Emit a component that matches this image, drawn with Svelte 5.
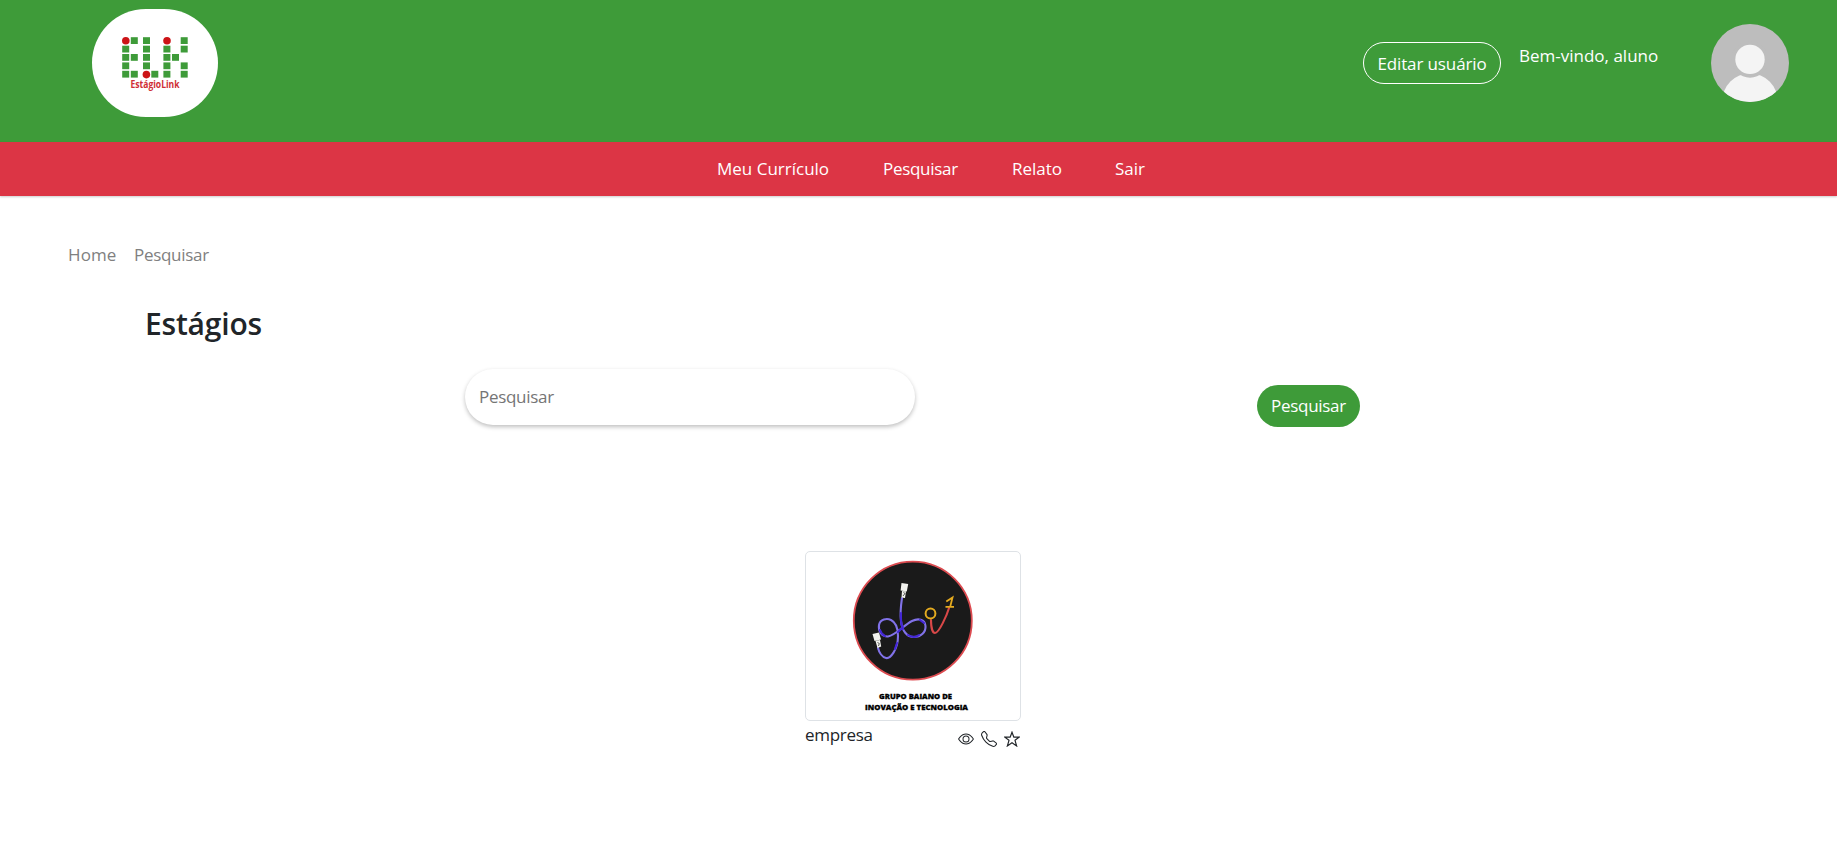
<script>
  const nav = [
    { label: 'Meu Currículo', cls: 'n1' },
    { label: 'Pesquisar', cls: 'n2' },
    { label: 'Relato', cls: 'n3' },
    { label: 'Sair', cls: 'n4' }
  ];
  const rows = [28.2, 36.7, 45, 53.4, 61.8];
  const squares = [
    [30.2, 1], [30.2, 2], [30.2, 3], [30.2, 4],
    [38.8, 0], [38.8, 2], [38.8, 4],
    [51, 0], [51, 1], [51, 2], [51, 3], [59.3, 4],
    [71.4, 1], [71.4, 2], [71.4, 3], [71.4, 4], [80, 2],
    [88.7, 0], [88.7, 1], [88.7, 3], [88.7, 4]
  ];
  const dots = [[33.8, 31.7], [54.4, 65.6], [75, 31.7]];
</script>

<header>
  <svg class="logo" width="126" height="108" viewBox="0 0 126 108">
    {#each squares as [x, r]}
      <rect {x} y={rows[r]} width="7" height="6.8" fill="#3e9b39" />
    {/each}
    {#each dots as [cx, cy]}
      <circle {cx} {cy} r="3.8" fill="#cc1417" />
    {/each}
    <text x="38.5" y="79" textLength="49" lengthAdjust="spacingAndGlyphs">EstágioLink</text>
  </svg>
  <div class="user">
    <button class="edit">Editar usuário</button>
    <span class="welcome">Bem-vindo, aluno</span>
    <svg class="avatar" width="78" height="78" viewBox="0 0 78 78">
      <defs><clipPath id="round"><circle cx="39" cy="39" r="39" /></clipPath></defs>
      <g clip-path="url(#round)">
        <rect width="78" height="78" fill="#bdbdbd" />
        <circle cx="39" cy="77.2" r="27.7" fill="#f4f4f4" />
        <circle cx="39" cy="35.4" r="18.3" fill="#bdbdbd" />
        <circle cx="39" cy="35.4" r="14.7" fill="#f4f4f4" />
      </g>
    </svg>
  </div>
</header>

<nav>
  {#each nav as item}
    <a class={item.cls} href="#top">{item.label}</a>
  {/each}
</nav>

<main>
  <div class="crumbs"><span class="home">Home</span><span>Pesquisar</span></div>
  <h2>Estágios</h2>
  <form class="search">
    <input placeholder="Pesquisar" />
    <button type="button">Pesquisar</button>
  </form>

  <section class="company">
    <div class="thumb">
      <svg width="214" height="167" viewBox="0 0 214 167">
        <circle cx="106.800" cy="68.700" r="59" fill="#1a1a1a" stroke="#dc4b50" stroke-width="1.800" />
        <g fill="none" stroke-width="2.100" stroke-linecap="round">
          <path stroke="#8172e8" d="M96 46C94.500 56 94 62 95 69C96 79 101 85 108 85C115 85 120 80 119.500 74C119 67 112 66 106 69C98 73 90 83 82 84.500C76 85 72 79 73 73C74 67 81 66 85 68C91 71 92 78 92 84C92 98 84 107 80 106C76 105 73 100 72 96" />
          <path stroke="#4326d5" d="M95 61C94.500 68 95 72 97 77M92 80L97 75M102 83C105 85 109 86 113 83M74 78C75 81 77 83 79 84M91 91L89 97M114 68L118 71" />
          <path stroke="#d94848" d="M125 68C125 77 127 81 129 81C133 81 141 63 143 56" />
          <g stroke="#e4ab20"><circle cx="124.500" cy="61.500" r="4.900" stroke-width="2" /><path stroke-width="1.800" stroke-linecap="butt" d="M140.300 49.500L146.500 45.500L144.200 54.800M139.500 54.800H148" /></g>
        </g>
        <g fill="#f2f2ee">
          <path d="M95.500 31L102.200 32L100.800 39.500L94.600 38.500ZM96 39L100 39.600L99 46L95.500 45.500Z" />
          <path d="M66.500 82L73 80.500L75 87.500L68.500 89ZM69.500 89L74 88L75.200 94.500L71.500 96Z" />
        </g>
        <path d="M97.500 40.500L99 41.500L97 44M71.500 90.500L73.300 91.500L72.500 94" stroke="#1a1a1a" stroke-width=".7" fill="none" />
        <g class="brand"><text x="73" y="147" textLength="73" lengthAdjust="spacingAndGlyphs">GRUPO BAIANO DE</text><text x="59" y="157.500" textLength="103" lengthAdjust="spacingAndGlyphs">INOVAÇÃO E TECNOLOGIA</text></g>
      </svg>
    </div>
    <div class="meta">
      <span class="name">empresa</span>
      <div class="icons">
        <svg viewBox="0 0 16 16"><path d="M16 8s-3-5.500-8-5.500S0 8 0 8s3 5.500 8 5.500S16 8 16 8M1.173 8a13 13 0 0 1 1.660-2.043C4.120 4.668 5.880 3.500 8 3.500s3.879 1.168 5.168 2.457A13 13 0 0 1 14.828 8q-.086.13-.195.288c-.335.48-.83 1.120-1.465 1.755C11.879 11.332 10.119 12.500 8 12.500s-3.879-1.168-5.168-2.457A13 13 0 0 1 1.172 8z" /><path d="M8 5.500a2.500 2.500 0 1 0 0 5 2.500 2.500 0 0 0 0-5M4.500 8a3.500 3.500 0 1 1 7 0 3.500 3.500 0 0 1-7 0" /></svg>
        <svg viewBox="0 0 16 16"><path d="M3.654 1.328a.678.678 0 0 0-1.015-.063L1.605 2.300c-.483.484-.661 1.169-.45 1.770a17.600 17.600 0 0 0 4.168 6.608 17.600 17.600 0 0 0 6.608 4.168c.601.211 1.286.033 1.770-.45l1.034-1.034a.678.678 0 0 0-.063-1.015l-2.307-1.794a.68.68 0 0 0-.58-.122l-2.190.547a1.750 1.750 0 0 1-1.657-.459L5.482 8.062a1.750 1.750 0 0 1-.46-1.657l.548-2.190a.68.68 0 0 0-.122-.58zM1.884.511a1.745 1.745 0 0 1 2.612.163L6.290 2.980c.329.423.445.974.315 1.494l-.547 2.190a.68.68 0 0 0 .178.643l2.457 2.457a.68.68 0 0 0 .644.178l2.189-.547a1.750 1.750 0 0 1 1.494.315l2.306 1.794c.829.645.905 1.870.163 2.611l-1.034 1.034c-.74.74-1.846 1.065-2.877.702a18.600 18.600 0 0 1-7.010-4.420 18.600 18.600 0 0 1-4.420-7.009c-.362-1.030-.037-2.137.703-2.877z" /></svg>
        <svg viewBox="0 0 16 16"><path class="star" d="M8 1.200L9.850 6.150H15.200L11 9.350L12.600 14.900L8 11.700L3.400 14.900L5 9.350L.8 6.150H6.150Z" /></svg>
      </div>
    </div>
  </section>
</main>

<style>
  :global(body) { margin: 0; background: #fff; overflow: hidden; }
  :global(#app) {
    font: 17px/27px "Open Sans", "Noto Sans", sans-serif;
    letter-spacing: -.3px;
    color: #212529;
  }
  header {
    height: 142px; box-sizing: border-box; padding: 9px 48px 0 92px;
    background: #3e9b39; display: flex; justify-content: space-between; align-items: flex-start;
  }
  .logo { background: #fff; border-radius: 54px; display: block; }
  .logo text { font: bold 10px "Open Sans", sans-serif; fill: #cf2e35; letter-spacing: 0; }
  .user { display: flex; align-items: flex-start; color: #fff; padding-top: 15px; }
  button {
    font: inherit; letter-spacing: inherit; box-sizing: border-box; height: 42px; padding: 0;
    border-radius: 21px; color: #fff; white-space: nowrap;
  }
  .edit { width: 138px; margin-top: 18px; border: 1px solid #fff; background: transparent; letter-spacing: -.12px; }
  .welcome { width: 192px; margin: 18px 0 0 18px; white-space: nowrap; letter-spacing: 0; }
  .avatar { display: block; }
  nav {
    height: 54px; box-sizing: border-box; padding: 0 0 1px 717px; background: #dc3545;
    display: flex; align-items: center; box-shadow: 0 1px 2px rgba(0, 0, 0, .2);
  }
  nav a { color: #fff; text-decoration: none; white-space: nowrap; }
  .n1 { width: 166px; letter-spacing: 0; }
  .n2 { width: 129px; }
  .n3 { width: 103px; letter-spacing: 0; }
  .n4 { letter-spacing: 0; }
  main { padding-top: 45px; }
  .crumbs { display: flex; padding-left: 68px; color: #808080; }
  .home { width: 66px; letter-spacing: .1px; }
  h2 { margin: 35px 0 0 145px; font-size: 30px; line-height: 42px; font-weight: 600; letter-spacing: -.2px; }
  .search { display: flex; align-items: flex-start; margin: 24px 0 0 465px; }
  input {
    width: 450px; height: 56px; box-sizing: border-box; padding: 0 14px 2px; border: 0; border-radius: 28px;
    font: inherit; letter-spacing: inherit; background: #fff; box-shadow: 0 2px 4px rgba(0, 0, 0, .25);
  }
  input::placeholder { color: #757575; opacity: 1; }
  .search button { width: 103px; margin: 16px 0 0 342px; padding-bottom: 2px; border: 0; background: #3e9b39; }
  .company { width: 216px; margin: 124px 0 0 805px; }
  .thumb { border: 1px solid #dee2e6; border-radius: 5px; height: 168px; }
  .thumb svg { display: block; }
  .brand text { font: 800 7.500px "Open Sans", sans-serif; fill: #000; stroke: #000; stroke-width: .3; letter-spacing: 0; }
  .meta { display: flex; justify-content: space-between; height: 30px; }
  .icons { display: flex; gap: 7px; padding: 10px 1px 0 0; }
  .icons svg { width: 16px; height: 16px; fill: #212529; }
  .icons .star { fill: none; stroke: #212529; stroke-width: 1.200; }
</style>
